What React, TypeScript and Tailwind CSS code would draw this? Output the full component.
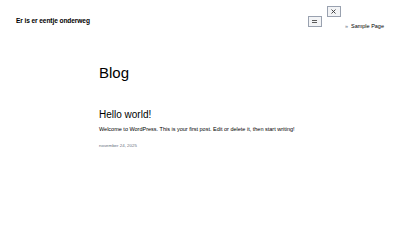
import React from 'react';

export default function App() {
  return (
    <div className="w-[400px] h-[250px] bg-white text-black font-['Liberation_Sans',Arial,sans-serif] overflow-hidden">
      <header className="flex items-start justify-between pl-4 pr-4 pt-[6px]">
        <div className="pt-[10px] text-[6.6px] font-bold tracking-[-0.1px]">Er is er eentje onderweg</div>
        <div className="flex items-start">
          <button className="mt-[10px] w-[14px] h-[11px] border border-gray-400 bg-gray-100 flex items-center justify-center">
            <svg width="7" height="5" viewBox="0 0 7 5">
              <path d="M1 1.5h5M1 3.5h5" stroke="#333" strokeWidth="0.8" />
            </svg>
          </button>
          <button className="ml-[5px] w-[14px] h-[11px] border border-gray-400 bg-gray-100 flex items-center justify-center">
            <svg width="7" height="7" viewBox="0 0 7 7">
              <path d="M1.5 1.5l4 4M5.5 1.5l-4 4" stroke="#333" strokeWidth="0.9" />
            </svg>
          </button>
          <ul className="mt-[16px] ml-[4px] text-[5.5px] leading-[8px]">
            <li className="flex items-center gap-[3px]">
              <span className="text-gray-500">»</span>
              <span>Sample Page</span>
            </li>
          </ul>
        </div>
      </header>
      <main className="pl-[99px] pt-[34px]">
        <h1 className="text-[15px] leading-[18px]">Blog</h1>
        <article className="mt-[26px]">
          <h2 className="text-[10px] leading-[14px]">Hello world!</h2>
          <p className="mt-[3px] text-[5.5px] leading-[8px]">Welcome to WordPress. This is your first post. Edit or delete it, then start writing!</p>
          <div className="mt-[10px] text-[4.4px] text-gray-500">november 24, 2025</div>
        </article>
      </main>
    </div>
  );
}
